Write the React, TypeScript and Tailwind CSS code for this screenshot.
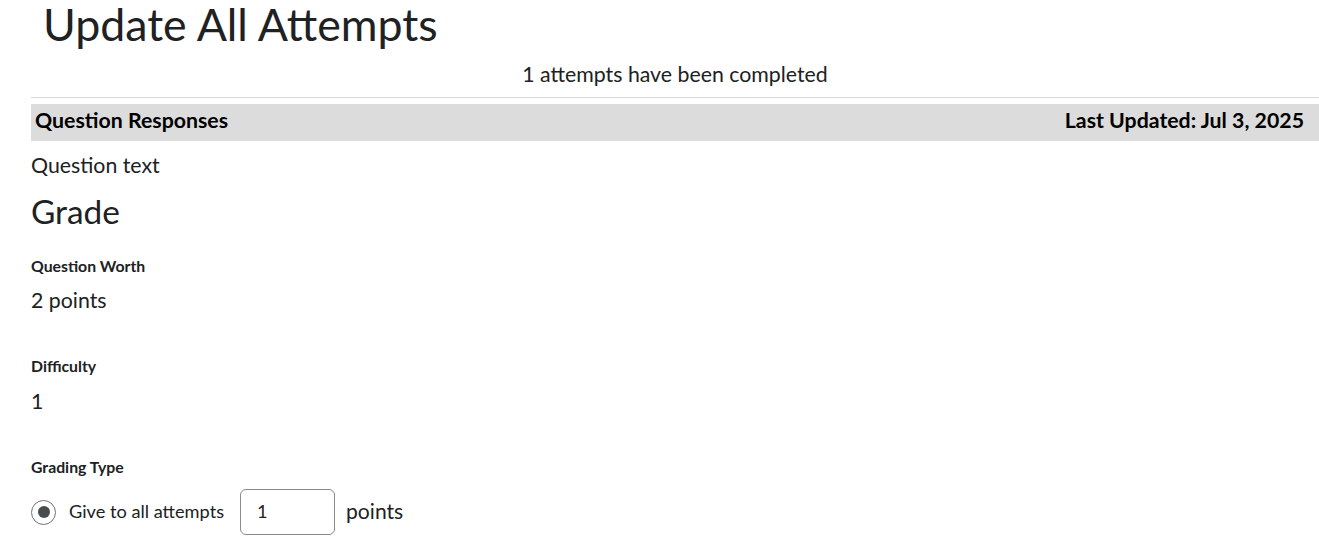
import React from "react";

export default function App() {
  return (
    <div className="w-[1319px] h-[538px] overflow-hidden bg-white text-[#202122]" style={{ fontFamily: "Lato, 'Noto Sans', sans-serif" }}>
      <div className="pl-[31px]">
        <h1 className="ml-[12px] mb-[4px] text-[44.7px] leading-[48px] font-normal text-[#202122]">Update All Attempts</h1>
        <div className="h-[45px] flex items-center justify-center text-[21.3px] text-[#202122]">1 attempts have been completed</div>
        <div className="h-px bg-[#d3d9e3]" />
        <div className="mt-[6px] h-[37px] pb-[3px] bg-[#dcdcdc] flex items-center justify-between px-[4px] pr-[15px] text-[21.3px] font-bold text-[#000]">
          <span>Question Responses</span>
          <span>Last Updated: Jul 3, 2025</span>
        </div>
        <div className="mt-[10px] text-[21.3px] leading-[28px]">Question text</div>
        <div className="mt-[12px] text-[33.4px] leading-[40px]">Grade</div>
        <div className="mt-[25px] text-[15.8px] leading-[20px] font-bold">Question Worth</div>
        <div className="mt-[12px] text-[21.3px] leading-[24px]">2 points</div>
        <div className="mt-[44px] text-[15.8px] leading-[20px] font-bold">Difficulty</div>
        <div className="mt-[13px] text-[21.3px] leading-[24px]">1</div>
        <div className="mt-[44px] text-[15.8px] leading-[20px] font-bold">Grading Type</div>
        <div className="mt-[12px] flex items-center">
          <span className="w-[25px] h-[25px] rounded-full border border-[#6e7376] flex items-center justify-center">
            <span className="w-[12px] h-[12px] rounded-full bg-[#494c4e]" />
          </span>
          <span className="ml-[13px] text-[18.2px]">Give to all attempts</span>
          <div className="ml-[16px] w-[95px] h-[46px] rounded-[6px] border border-[#898b8d] flex items-center pl-[16px] text-[18.2px]">1</div>
          <span className="ml-[11px] text-[21.1px] -mt-[2px]">points</span>
        </div>
      </div>
    </div>
  );
}
